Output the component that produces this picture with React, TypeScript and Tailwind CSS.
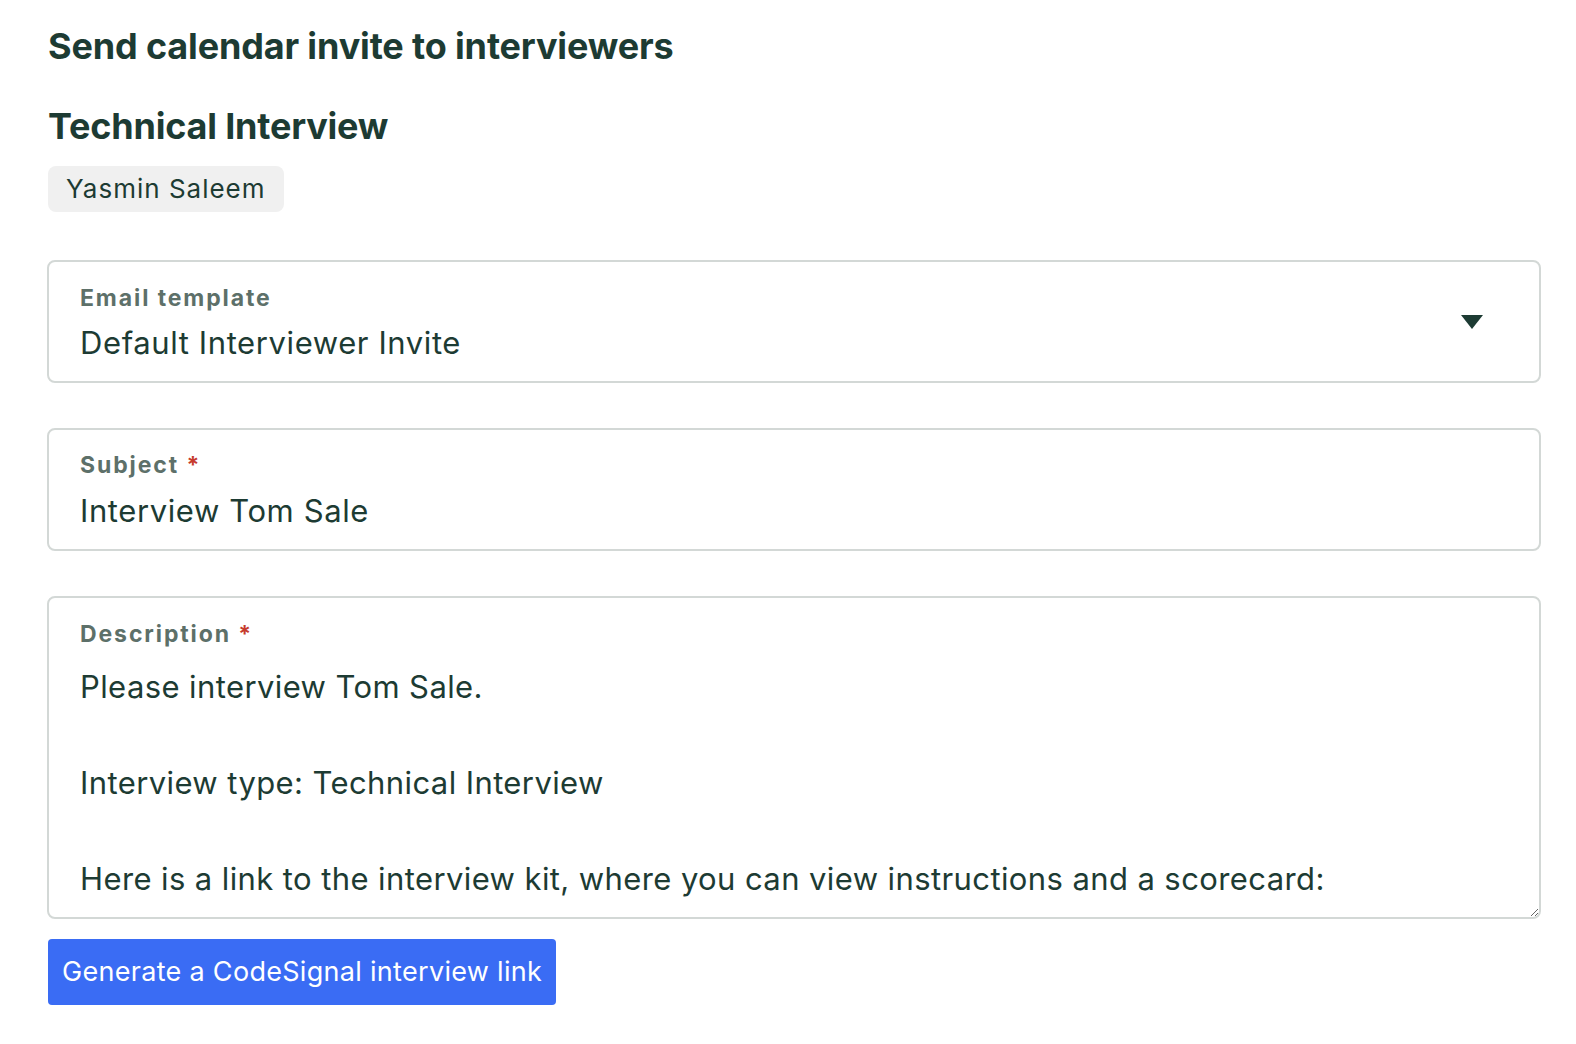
import React from "react";

const font = { fontFamily: "Inter, 'Noto Sans', sans-serif" } as React.CSSProperties;

const descText =
  "Please interview Tom Sale.\n\nInterview type: Technical Interview\n\nHere is a link to the interview kit, where you can view instructions and a scorecard:\n\n{{INTERVIEW_KIT_LINK}}";

export default function App() {
  return (
    <div
      className="min-h-screen w-full bg-white pl-[47px] pr-[35px] text-[#1d3b33]"
      style={font}
    >
      <h1 className="pt-[26px] pl-px text-[36px] font-bold leading-[40px] tracking-[-0.15px]">
        Send calendar invite to interviewers
      </h1>
      <h2 className="mt-[40px] pl-px text-[36px] font-bold leading-[40px] tracking-[-0.2px]">
        Technical Interview
      </h2>
      <div className="mt-[20px] pl-px">
        <span className="inline-flex h-[46px] items-center rounded-[8px] bg-[#f0f0f0] px-[18px] text-[26px] leading-none tracking-[1px]">
          Yasmin Saleem
        </span>
      </div>

      <div className="mt-[48px] flex items-center rounded-[8px] border-2 border-[#d3d8d6] pl-[31px] pr-[56px] pt-[22px] pb-[20px]">
        <div className="flex-1">
          <div className="text-[23px] font-bold leading-[28px] tracking-[1.9px] text-[#5d7069]">Email template</div>
          <div className="mt-[13px] text-[31px] leading-[36px] tracking-[0.6px]">Default Interviewer Invite</div>
        </div>
        <svg width="22" height="14" viewBox="0 0 22 14" className="mt-[-2px]">
          <path d="M0 0 H22 L11 14 Z" fill="#1d3b33" />
        </svg>
      </div>

      <div className="mt-[45px] rounded-[8px] border-2 border-[#d3d8d6] pl-[31px] pr-[31px] pt-[21px] pb-[20px]">
        <div className="text-[23px] font-bold leading-[28px] tracking-[1.9px] text-[#5d7069]">
          Subject <span className="text-[#c63b2d]">*</span>
        </div>
        <div className="mt-[14px] text-[31px] leading-[36px] tracking-[0.6px]">Interview Tom Sale</div>
      </div>

      <div className="mt-[45px] flex h-[323px] flex-col overflow-hidden rounded-[8px] border-2 border-[#d3d8d6]">
        <div className="pl-[31px] pt-[22px] text-[23px] font-bold leading-[28px] tracking-[1.9px] text-[#5d7069]">
          Description <span className="text-[#c63b2d]">*</span>
        </div>
        <textarea
          readOnly
          defaultValue={descText}
          className="mt-[15px] w-full flex-1 resize-y overflow-hidden border-0 bg-transparent pl-[31px] pr-[31px] text-[31px] leading-[48px] tracking-[0.4px] text-[#1d3b33] outline-none"
          style={font}
        />
      </div>

      <button
        className="mt-[20px] ml-px flex h-[66px] items-center rounded-[4px] bg-[#3a6cf4] px-[14px] text-[27px] tracking-[0.3px] text-white"
        style={font}
      >
        Generate a CodeSignal interview link
      </button>
    </div>
  );
}
